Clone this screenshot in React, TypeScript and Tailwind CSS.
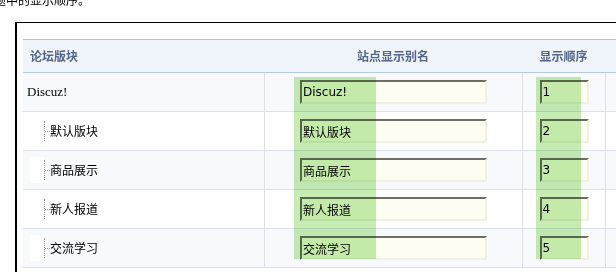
import React from "react";

interface Forum {
   name: string;
   order: number;
   child: boolean;
}

const forums: Forum[] = [
   { name: "Discuz!", order: 1, child: false },
   { name: "默认版块", order: 2, child: true },
   { name: "商品展示", order: 3, child: true },
   { name: "新人报道", order: 4, child: true },
   { name: "交流学习", order: 5, child: true },
];

const inputClass =
   "block h-[24px] border-2 border-t-[#6e6e66] border-l-[#6e6e66] border-r-[#f0f0e4] border-b-[#f0f0e4] bg-[#fdfdf1] px-[1px] text-[12px] text-black outline-none font-['DejaVu_Sans','Noto_Sans_CJK_SC',sans-serif]";

export default function App() {
   return (
      <div className="relative w-[616px] h-[272px] overflow-hidden bg-white text-[12px] text-black font-['Noto_Sans_CJK_SC',sans-serif]">
         <p className="-mt-[6px] -ml-[6px] leading-[12px] whitespace-nowrap">
            题中的显示顺序。
         </p>

         <div className="mt-[16px] ml-[15px] w-[660px] border-t border-l-2 border-black pl-[6px] pt-[16px] pb-6">
            {/* Header */}
            <div className="grid grid-cols-[241px_258px_83px_1fr] h-[34px] border-y border-[#b4cadc] bg-[#eef4fa] font-bold text-[#56668a]">
               <div className="flex items-center pl-[7px]">论坛版块</div>
               <div className="flex items-center justify-center">站点显示别名</div>
               <div className="flex items-center justify-center">显示顺序</div>
               <div />
            </div>

            {/* Rows */}
            {forums.map((forum, i) => (
               <div
                  key={forum.name}
                  className={`grid grid-cols-[241px_258px_83px_1fr] h-[39px] border-b border-[#dde1e7] ${
                     i % 2 === 0 ? "bg-[#f8f9fd]" : "bg-white"
                  }`}
               >
                  <div className="flex items-center">
                     {forum.child ? (
                        <>
                           <div className="ml-[7px] h-[26px] w-[14px] bg-white" />
                           <div className="flex h-[20px] items-center">
                              <div className="h-full border-l border-dotted border-[#9a9a9a]" />
                              <div className="w-[5px] border-t border-dotted border-[#9a9a9a]" />
                           </div>
                           <span>{forum.name}</span>
                        </>
                     ) : (
                        <span className="pl-[4px] font-['Liberation_Serif',serif] text-[13px]">
                           {forum.name}
                        </span>
                     )}
                  </div>
                  <div className="flex items-center justify-center border-l border-[#dde1e7]">
                     <input
                        className={`${inputClass} w-[187px]`}
                        defaultValue={forum.name}
                     />
                  </div>
                  <div className="flex items-center justify-center border-l border-[#dde1e7]">
                     <input
                        className={`${inputClass} w-[49px]`}
                        defaultValue={String(forum.order)}
                     />
                  </div>
                  <div className="border-l border-[#dde1e7]" />
               </div>
            ))}
         </div>

         {/* Highlight bands */}
         <div className="absolute left-[294px] top-[77px] w-[82px] h-[182px] bg-[#c6ecb4] mix-blend-multiply" />
         <div className="absolute left-[536px] top-[77px] w-[45px] h-[182px] bg-[#c6ecb4] mix-blend-multiply" />
      </div>
   );
}
